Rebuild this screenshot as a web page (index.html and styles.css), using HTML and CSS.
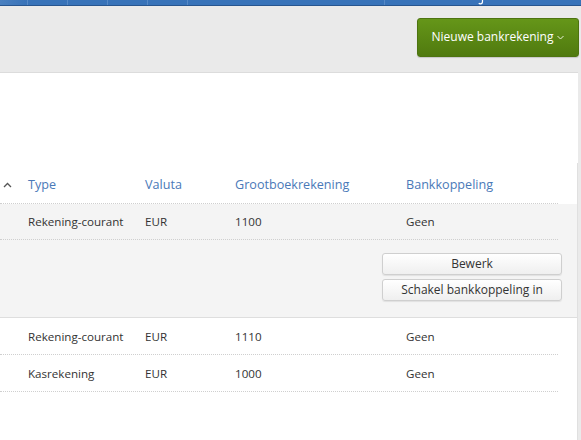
FILE: index.html
```html
<!DOCTYPE html>
<html lang="nl">
<head>
<meta charset="utf-8">
<title>Bankrekeningen</title>
<link rel="stylesheet" href="styles.css">
</head>
<body>
<div class="topbar">
  <span class="tab tab-first"></span>
  <span class="tab"></span>
  <span class="tab"></span>
  <span class="tab"></span>
  <span class="tab"></span>
  <span class="tab tab-wide"></span>
  <span class="tab tab-last"><svg class="tab-hook" width="6" height="5" viewBox="0 0 6 5"><path d="M4.5 0 L4.5 1.6 Q4.5 3.8 2.5 3.8 Q1.2 3.8 0.8 3.2" fill="none" stroke="#ffffff" stroke-width="1.2"/></svg></span>
</div>
<div class="toolbar">
  <button class="btn-primary">Nieuwe bankrekening <svg class="caret" width="7" height="5" viewBox="0 0 7 5"><path d="M0.5 1 L3.5 4 L6.5 1" fill="none" stroke="#e8f0d8" stroke-width="1"/></svg></button>
</div>
<div class="card">
  <div class="table">
    <div class="row head">
      <div class="cell sort"><svg width="9" height="6" viewBox="0 0 9 6"><path d="M1 5 L4.5 1.5 L8 5" fill="none" stroke="#555" stroke-width="1.3"/></svg></div>
      <div class="cell">Type</div>
      <div class="cell">Valuta</div>
      <div class="cell">Grootboekrekening</div>
      <div class="cell">Bankkoppeling</div>
    </div>
    <div class="expanded">
      <div class="row">
        <div class="cell"></div>
        <div class="cell">Rekening-courant</div>
        <div class="cell">EUR</div>
        <div class="cell">1100</div>
        <div class="cell">Geen</div>
      </div>
      <div class="actions">
        <button class="btn">Bewerk</button>
        <button class="btn">Schakel bankkoppeling in</button>
      </div>
    </div>
    <div class="row">
      <div class="cell"></div>
      <div class="cell">Rekening-courant</div>
      <div class="cell">EUR</div>
      <div class="cell">1110</div>
      <div class="cell">Geen</div>
    </div>
    <div class="row">
      <div class="cell"></div>
      <div class="cell">Kasrekening</div>
      <div class="cell">EUR</div>
      <div class="cell">1000</div>
      <div class="cell">Geen</div>
    </div>
  </div>
</div>
</body>
</html>
```
FILE: styles.css
```css
* { box-sizing: border-box; }
html, body { margin: 0; padding: 0; height: 100%; }
body {
  background: #eaeaea;
  font-family: "Open Sans", "Noto Sans", sans-serif;
  font-size: 11.6px;
  color: #333;
  overflow: hidden;
}
.topbar {
  height: 6px;
  background: #3873b9;
  border-bottom: 1px solid #27558f;
  display: flex;
  overflow: hidden;
}
.tab {
  width: 40px;
  border-right: 1px solid #5689c6;
  height: 5px;
}
.tab-first {
  width: 28px;
  background: linear-gradient(90deg, #4a80c0, #3873b9);
}
.tab-wide { width: 197px; }
.tab-last { flex: 1; border-right: none; position: relative; }
.tab-hook {
  position: absolute;
  left: 93px;
  top: 0;
}
.toolbar {
  display: flex;
  justify-content: flex-end;
  padding: 12px 2px 15px 0;
}
.btn-primary {
  height: 39px;
  width: 162px;
  border: 1px solid #4d7410;
  border-radius: 3px;
  background: linear-gradient(#659619, #507a0f);
  color: #fff;
  font-family: "Open Sans", "Noto Sans", sans-serif;
  font-size: 12px;
  padding: 0 0 2px 0;
  display: flex;
  align-items: center;
  justify-content: center;
  gap: 4px;
  box-shadow: 0 1px 1px rgba(0,0,0,0.15);
}
.caret { margin-top: 2px; }
.card {
  background: #fff;
  border-top: 1px solid #dcdcdc;
  margin-right: 3px;
  height: 368px;
  padding-top: 90px;
}
.table {
  border-right: 1px solid #e0e0e0;
  height: 100%;
}
.row {
  display: grid;
  grid-template-columns: 28px 117px 90px 171px 152px;
  width: 558px;
  height: 37px;
  align-items: center;
  border-bottom: 1px dotted #cfcfcf;
}
.row.head {
  height: 41px;
  color: #4a79b8;
  font-size: 12.6px;
  padding-top: 3px;
}
.sort { display: flex; align-items: center; padding-left: 3px; padding-top: 1px; }
.expanded {
  background: #f4f4f4;
  border-bottom: 1px solid #dedede;
}
.expanded .row { height: 36px; }
.actions {
  margin-left: 382px;
  width: 180px;
  padding: 13px 0 16px;
  display: flex;
  flex-direction: column;
  gap: 4px;
}
.btn {
  height: 22px;
  border: 1px solid #cfcfcf;
  border-radius: 3px;
  background: linear-gradient(#ffffff, #efefef);
  box-shadow: 0 1px 1px rgba(0,0,0,0.08);
  font-family: "Open Sans", "Noto Sans", sans-serif;
  font-size: 12px;
  color: #333;
  padding: 0 0 1px;
}
```
